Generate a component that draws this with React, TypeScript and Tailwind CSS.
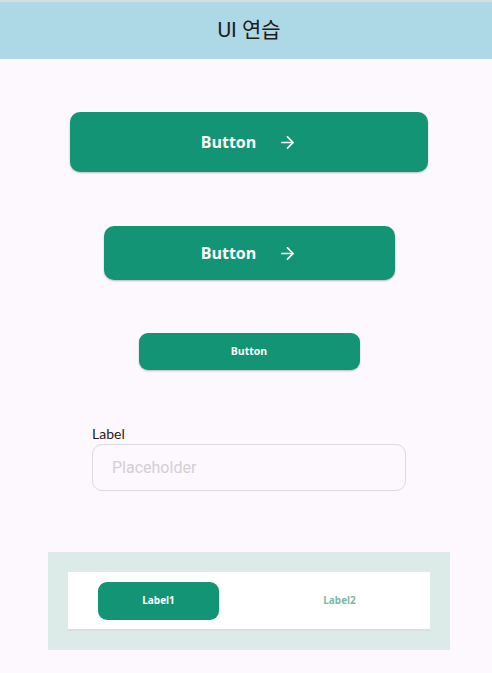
import React from "react";

const Arrow = ({ size }: { size: number }) => (
  <svg width={size} height={size} viewBox="0 0 24 24" fill="none" stroke="white" strokeWidth={2.2} strokeLinecap="round" strokeLinejoin="round">
    <path d="M5 12h14" />
    <path d="M12 5l7 7-7 7" />
  </svg>
);

export default function App() {
  return (
    <div className="min-h-[673px] w-[492px] bg-[#fdf7fe] flex flex-col">
      <div className="border-t-2 border-[#d9dcdc] bg-[#add8e6] h-[59px] flex items-center justify-center pl-[6px]">
        <span className="text-[21px] text-[#1d1b20]" style={{ fontFamily: "Roboto, 'Noto Sans CJK KR', sans-serif" }}>
          UI 연습
        </span>
      </div>
      <div className="flex flex-col items-center pl-[6px]" style={{ fontFamily: "'Open Sans', sans-serif" }}>
        <button className="mt-[53px] w-[358px] h-[60px] rounded-[10px] bg-[#139474] shadow-[0_1px_2px_rgba(0,0,0,0.25)] flex items-center justify-center gap-[22px]">
          <span className="text-white font-bold text-[16px]">Button</span>
          <Arrow size={19} />
        </button>
        <button className="mt-[54px] w-[291px] h-[54px] rounded-[10px] bg-[#139474] shadow-[0_1px_2px_rgba(0,0,0,0.25)] flex items-center justify-center gap-[22px]">
          <span className="text-white font-bold text-[16px]">Button</span>
          <Arrow size={19} />
        </button>
        <button className="mt-[53px] w-[221px] h-[37px] rounded-[9px] bg-[#139474] shadow-[0_1px_2px_rgba(0,0,0,0.25)] flex items-center justify-center">
          <span className="text-white font-bold text-[10.5px]">Button</span>
        </button>
        <div className="mt-[55px] w-[314px] flex flex-col">
          <span className="text-[14px] text-[#1d1b20] leading-[18px] mb-[1px]" style={{ fontFamily: "Lato, sans-serif" }}>Label</span>
          <div className="h-[47px] rounded-[10px] border-[1.5px] border-[#dcdadc] flex items-center px-[19px]">
            <span className="text-[16px] text-[#d2d0d2]" style={{ fontFamily: "Roboto, sans-serif" }}>
              Placeholder
            </span>
          </div>
        </div>
        <div className="mt-[61px] w-[402px] h-[98px] bg-[#dcebe7] p-[20px]">
          <div className="bg-white h-[57px] shadow-[0_2px_0_#dcdde0] flex items-center">
            <div className="flex-1 flex justify-center">
              <div className="w-[121px] h-[38px] rounded-[9px] bg-[#139474] flex items-center justify-center">
                <span className="text-white font-bold text-[10px]">Label1</span>
              </div>
            </div>
            <div className="flex-1 flex justify-center">
              <span className="text-[#7db7a4] font-bold text-[10px]">Label2</span>
            </div>
          </div>
        </div>
      </div>
    </div>
  );
}
